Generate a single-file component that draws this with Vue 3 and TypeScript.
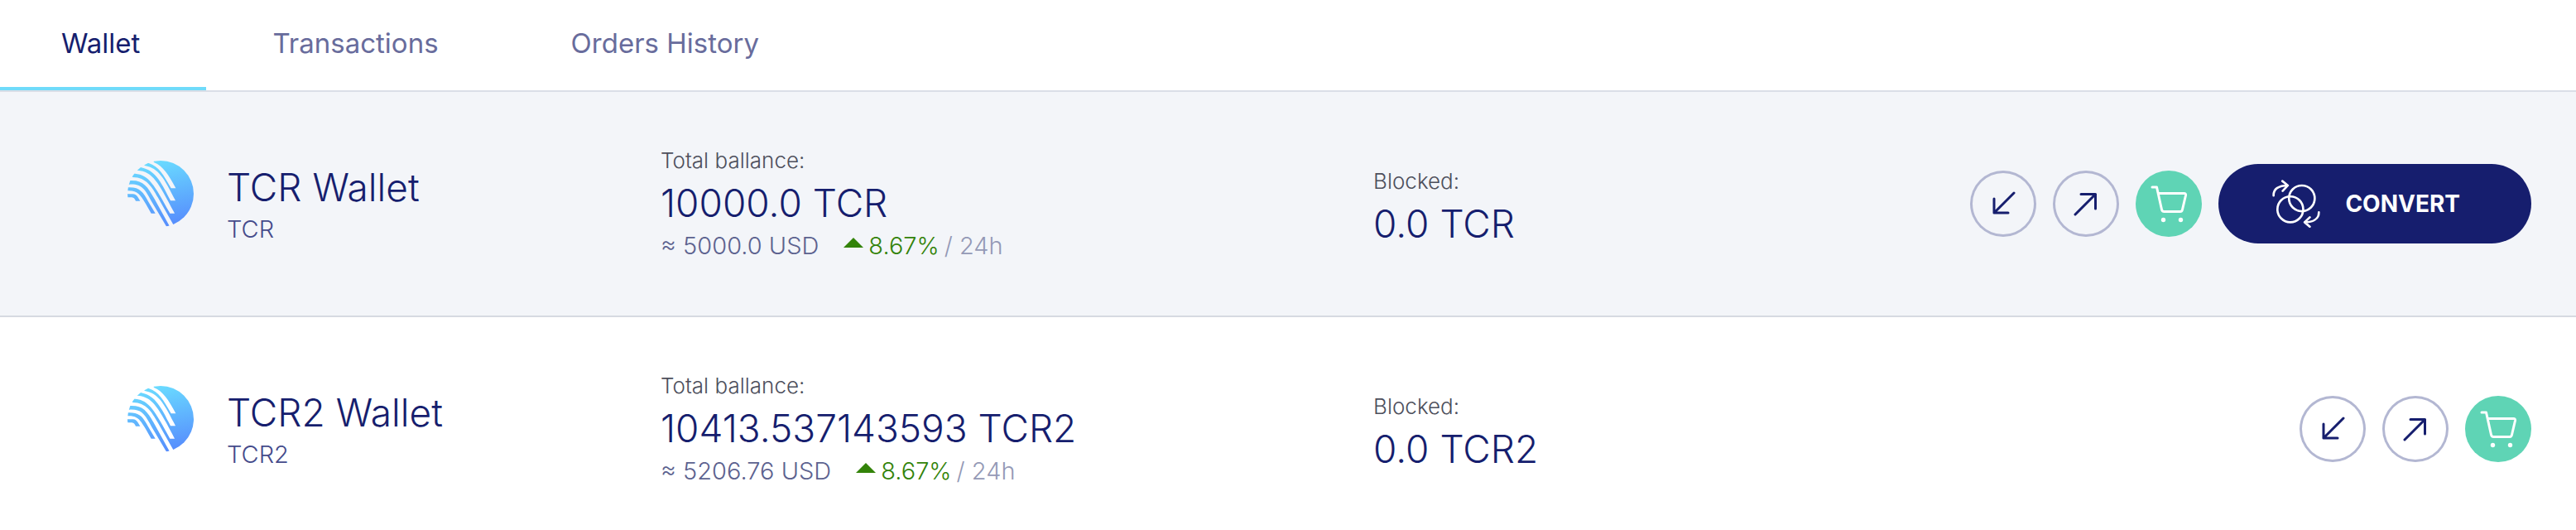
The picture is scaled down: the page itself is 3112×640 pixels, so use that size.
<script setup lang="ts">
import { ref } from 'vue'

interface Wallet {
  symbol: string
  total: string
  usd: string
  change: string
  blocked: string
  convertible: boolean
}

const tabs = ['Wallet', 'Transactions', 'Orders History']
const activeTab = ref('Wallet')
const selected = ref('TCR')

const wallets: Wallet[] = [
  { symbol: 'TCR', total: '10000.0', usd: '5000.0', change: '8.67%', blocked: '0.0', convertible: true },
  { symbol: 'TCR2', total: '10413.537143593', usd: '5206.76', change: '8.67%', blocked: '0.0', convertible: false },
]
</script>

<template>
  <div class="page">
    <nav class="tabs">
      <button
        v-for="tab in tabs"
        :key="tab"
        type="button"
        class="tab"
        :class="{ active: tab === activeTab }"
        @click="activeTab = tab"
      >
        {{ tab }}
      </button>
    </nav>

    <main>
      <article
        v-for="wallet in wallets"
        :key="wallet.symbol"
        class="wallet"
        :class="{ selected: wallet.symbol === selected }"
        @click="selected = wallet.symbol"
      >
        <div class="identity">
          <svg class="logo" viewBox="42 41 240 240" aria-hidden="true">
            <defs>
              <linearGradient :id="`fill-${wallet.symbol}`" x1="0.4" y1="0" x2="0.6" y2="1">
                <stop offset="0" stop-color="#6adcff" />
                <stop offset="1" stop-color="#568cfd" />
              </linearGradient>
              <mask :id="`stripes-${wallet.symbol}`" maskUnits="userSpaceOnUse" x="30" y="30" width="270" height="270">
                <rect x="30" y="30" width="270" height="270" fill="#fff" />
                <g fill="#000">
                  <path d="M100 44L121 51C155 62 172 92 200 141H217C190 90 172 62 138 47L130 30Z" />
                  <path d="M80 58L92 66C140 76 160 110 198 186H216C175 105 155 68 105 59L95 50Z" />
                  <path d="M60 84L70 88C120 92 140 130 196 232H213C155 122 135 80 78 76L68 66Z" />
                  <path d="M45 112L55 113C100 112 115 135 140 180L201 290H218L152 174C130 135 110 102 62 101L50 96Z" />
                  <path d="M40 127H50C95 125 105 145 130 190L187 286V300H30V127Z" />
                </g>
                <g fill="#fff">
                  <path d="M40 138H46C88 137 98 155 118 190L143 232H128L108 197C88 165 80 149 43 150H40Z" />
                  <path d="M40 162H62C75 162 80 174 88 187H72C66 176 63 174 55 174H40Z" />
                </g>
              </mask>
            </defs>
            <circle cx="162" cy="161" r="120" :fill="`url(#fill-${wallet.symbol})`" :mask="`url(#stripes-${wallet.symbol})`" />
          </svg>
          <div>
            <h2 class="name">{{ wallet.symbol }} Wallet</h2>
            <p class="symbol">{{ wallet.symbol }}</p>
          </div>
        </div>

        <div>
          <p class="label">Total ballance:</p>
          <p class="amount">{{ wallet.total }} {{ wallet.symbol }}</p>
          <p class="worth">
            <span>≈ {{ wallet.usd }} USD</span>
            <svg class="rise" viewBox="0 0 24 12" aria-hidden="true"><path d="M0 12L12 0L24 12Z" fill="#338309" /></svg>
            <span class="change">{{ wallet.change }}</span>
            <span class="period">/ 24h</span>
          </p>
        </div>

        <div class="blocked">
          <p class="label">Blocked:</p>
          <p class="amount">{{ wallet.blocked }} {{ wallet.symbol }}</p>
        </div>

        <div class="actions">
          <button type="button" class="round" aria-label="Receive">
            <svg viewBox="0 0 80 80"><path d="M53 27L29 51M29 34V51H46" /></svg>
          </button>
          <button type="button" class="round" aria-label="Send">
            <svg viewBox="0 0 80 80"><path d="M27 53L51.5 28.5M34 28.5H51.5V46" /></svg>
          </button>
          <button type="button" class="round buy" aria-label="Buy">
            <svg viewBox="0 0 80 80">
              <path d="M20 20H25.5L31.5 47Q32 49.5 34.5 49.5H54Q56 49.5 56.5 47L60.5 30Q61 27.5 58.5 27.5H27.5" />
              <circle cx="33.5" cy="59.5" r="2.7" />
              <circle cx="54.5" cy="59.5" r="2.7" />
            </svg>
          </button>
          <button v-if="wallet.convertible" type="button" class="convert">
            <svg viewBox="255 110 175 175" aria-hidden="true">
              <circle cx="363" cy="178" r="47" />
              <circle cx="321" cy="218" r="47" />
              <path d="M260 168C259 144 277 131 312 131M292 115L312 131L293 151" />
              <path d="M425 229C425 252 405 265 373 265M392 247L373 265L392 281" />
            </svg>
            CONVERT
          </button>
        </div>
      </article>
    </main>
  </div>
</template>

<style>
body {
  margin: 0;
  background: #fff;
}
</style>

<style scoped>
.page {
  font-family: Inter, "Liberation Sans", sans-serif;
  color: #161e6e;
}

button {
  padding: 0;
  border: 0;
  background: none;
  font-family: inherit;
  color: inherit;
  cursor: pointer;
}

h2,
p {
  margin: 0;
  font-weight: 300;
  white-space: nowrap;
}

.tabs {
  display: flex;
  border-bottom: 2px solid #dadee7;
}

.tab {
  padding: 30px 80px 31px;
  border-bottom: 4px solid transparent;
  font-size: 33px;
  line-height: 44px;
  color: #686c9c;
}

.tab:first-child {
  padding-left: 74px;
}

.tab.active {
  border-bottom-color: #6fdbfa;
  color: #161e6e;
}

.wallet {
  display: grid;
  grid-template-columns: 644fr 861fr 645fr 754fr;
  align-items: center;
  min-height: 270px;
  padding: 0 54px 0 154px;
  border-bottom: 2px solid #d6dae1;
}

.wallet:last-child {
  border-bottom: 0;
}

.wallet.selected {
  background: #f3f5f9;
}

.identity {
  display: flex;
  align-items: center;
  gap: 40px;
}

.logo {
  width: 80px;
  height: 80px;
  margin-bottom: 24px;
}

.name {
  font-size: 46px;
  line-height: 62px;
}

.symbol {
  font-size: 29px;
  line-height: 40px;
  color: #454b8b;
}

.blocked {
  padding-top: 14px;
}

.label {
  font-size: 26px;
  line-height: 34px;
  color: #4d4f5c;
}

.amount {
  font-size: 46px;
  line-height: 68px;
}

.worth {
  display: flex;
  font-size: 29px;
  line-height: 36px;
  color: #5c628f;
}

.rise {
  width: 24px;
  height: 12px;
  margin: 8px 6px 0 30px;
}

.change {
  color: #338309;
}

.period {
  margin-left: 6px;
  color: #9499b6;
}

.actions {
  display: flex;
  align-items: center;
  justify-content: flex-end;
  gap: 20px;
}

.actions svg {
  flex: none;
  fill: none;
  stroke: currentColor;
  stroke-linecap: round;
  stroke-linejoin: round;
}

.round {
  flex: none;
  width: 80px;
  height: 80px;
  border-radius: 50%;
  box-shadow: inset 0 0 0 3px #b3b7d2;
}

.round svg {
  display: block;
  width: 80px;
  height: 80px;
  stroke-width: 3px;
}

.buy {
  background: #5fd4b5;
  box-shadow: none;
  color: #fff;
}

.buy circle {
  fill: currentColor;
  stroke: none;
}

.convert {
  display: flex;
  align-items: center;
  gap: 30px;
  height: 96px;
  padding: 0 86px 0 65px;
  border-radius: 48px;
  background: #161e6e;
  font-size: 28px;
  font-weight: 700;
  color: #fff;
}

.convert svg {
  width: 58px;
  height: 58px;
  stroke-width: 8px;
}
</style>
